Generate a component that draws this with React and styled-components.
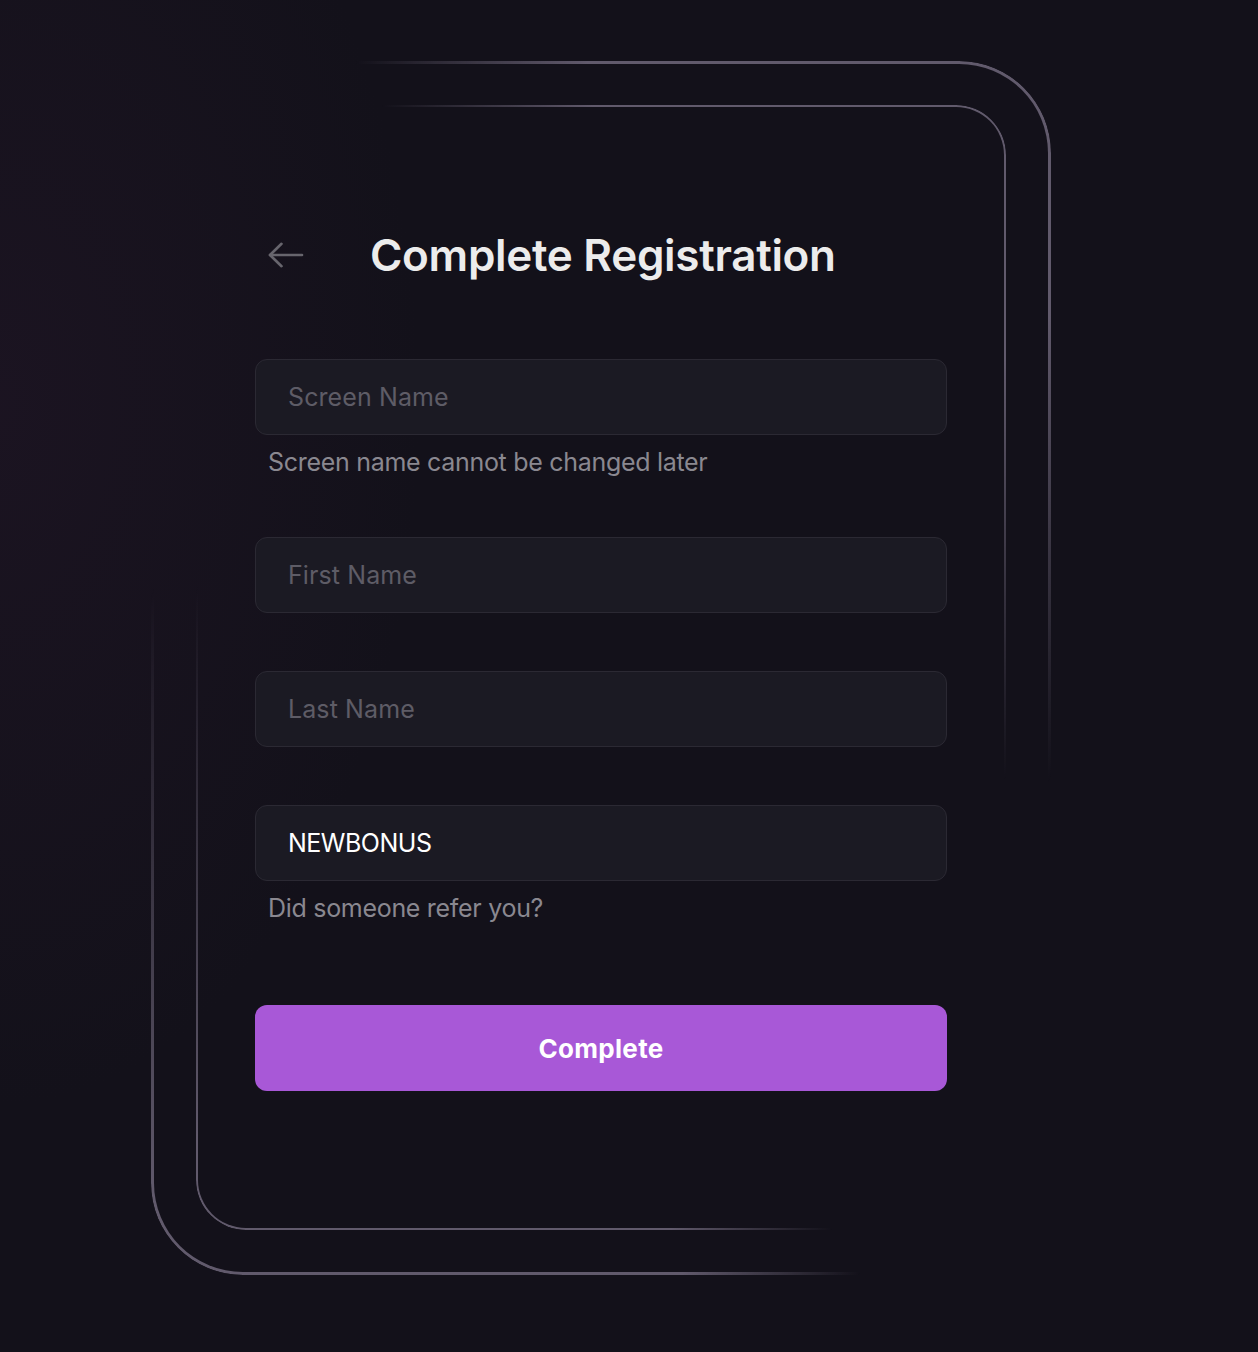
import React from "react";
import styled, { createGlobalStyle } from "styled-components";

const GlobalStyle = createGlobalStyle`
  html, body {
    margin: 0;
    padding: 0;
    background: #13111a;
  }
  * { box-sizing: border-box; }
`;

const Page = styled.div`
  min-height: 1352px;
  padding: 61px 0 0 151px;
  background:
    radial-gradient(ellipse 420px 700px at 0% 30%, rgba(28, 20, 34, 0.9), rgba(19, 17, 26, 0) 100%),
    #13111a;
  font-family: Inter, "Noto Sans", "Liberation Sans", sans-serif;
`;

const Frame = styled.div`
  position: relative;
  width: ${(p) => p.$w}px;
  height: ${(p) => p.$h}px;
  border-radius: ${(p) => p.$radius}px;
  padding: ${(p) => p.$pad};

  &::before {
    content: "";
    position: absolute;
    inset: 0;
    border-radius: inherit;
    padding: ${(p) => p.$stroke}px;
    background: linear-gradient(
      111deg,
      rgba(97, 90, 108, 0) 15%,
      rgba(97, 90, 108, 1) 32%,
      rgba(97, 90, 108, 1) 73%,
      rgba(97, 90, 108, 0) 86%
    );
    -webkit-mask: linear-gradient(#000 0 0) content-box, linear-gradient(#000 0 0);
    -webkit-mask-composite: xor;
    mask-composite: exclude;
    pointer-events: none;
  }
`;

const Content = styled.div`
  display: flex;
  flex-direction: column;
  padding: 120px 59px 0 59px;
`;

const Header = styled.div`
  display: flex;
  align-items: center;
  gap: 66px;
  height: 60px;
  padding-left: 13px;
`;

const BackButton = styled.button`
  display: flex;
  align-items: center;
  justify-content: center;
  background: none;
  border: none;
  padding: 0;
  cursor: pointer;
  color: #67656d;
`;

const Title = styled.h1`
  margin: 0;
  font-size: 44px;
  font-weight: 600;
  letter-spacing: -0.3px;
  color: #ececec;
`;

const Form = styled.form`
  display: flex;
  flex-direction: column;
  gap: 58px;
  margin-top: 74px;
`;

const Group = styled.div`
  display: flex;
  flex-direction: column;
`;

const Input = styled.input`
  width: 100%;
  height: 76px;
  border-radius: 12px;
  border: 1px solid #2b2933;
  background: #1b1a23;
  padding: 0 32px;
  font-family: inherit;
  font-size: 25px;
  letter-spacing: -0.5px;
  color: #ffffff;
  outline: none;

  &::placeholder {
    color: #5e5c66;
    letter-spacing: 0.1px;
  }
`;

const Helper = styled.div`
  margin-top: 11px;
  padding-left: 13px;
  font-size: 25px;
  line-height: 33px;
  letter-spacing: -0.3px;
  color: #8a8890;
`;

const SubmitButton = styled.button`
  margin-top: 22px;
  height: 86px;
  width: 100%;
  border: none;
  border-radius: 12px;
  background: #a858d7;
  color: #ffffff;
  font-family: inherit;
  font-size: 26px;
  font-weight: 700;
  letter-spacing: 0.3px;
  cursor: pointer;
`;

function ArrowLeft() {
  return (
    <svg width="36" height="26" viewBox="0 0 36 26" fill="none" stroke="currentColor" strokeWidth="2.6" strokeLinecap="round" strokeLinejoin="round">
      <path d="M2 13 H34" />
      <path d="M13.5 1.8 L2 13 L13.5 24.2" />
    </svg>
  );
}

export default function App() {
  return (
    <>
      <GlobalStyle />
      <Page>
        <Frame $w={900} $h={1214} $radius={92} $stroke={3} $pad="44px 45px 45px 45px">
          <Frame $w={810} $h={1125} $radius={50} $stroke={2} $pad="0">
            <Content>
              <Header>
                <BackButton aria-label="Back">
                  <ArrowLeft />
                </BackButton>
                <Title>Complete Registration</Title>
              </Header>
              <Form onSubmit={(e) => e.preventDefault()}>
                <Group>
                  <Input placeholder="Screen Name" />
                  <Helper>Screen name cannot be changed later</Helper>
                </Group>
                <Group>
                  <Input placeholder="First Name" />
                </Group>
                <Group>
                  <Input placeholder="Last Name" />
                </Group>
                <Group>
                  <Input defaultValue="NEWBONUS" />
                  <Helper>Did someone refer you?</Helper>
                </Group>
                <SubmitButton type="submit">Complete</SubmitButton>
              </Form>
            </Content>
          </Frame>
        </Frame>
      </Page>
    </>
  );
}
